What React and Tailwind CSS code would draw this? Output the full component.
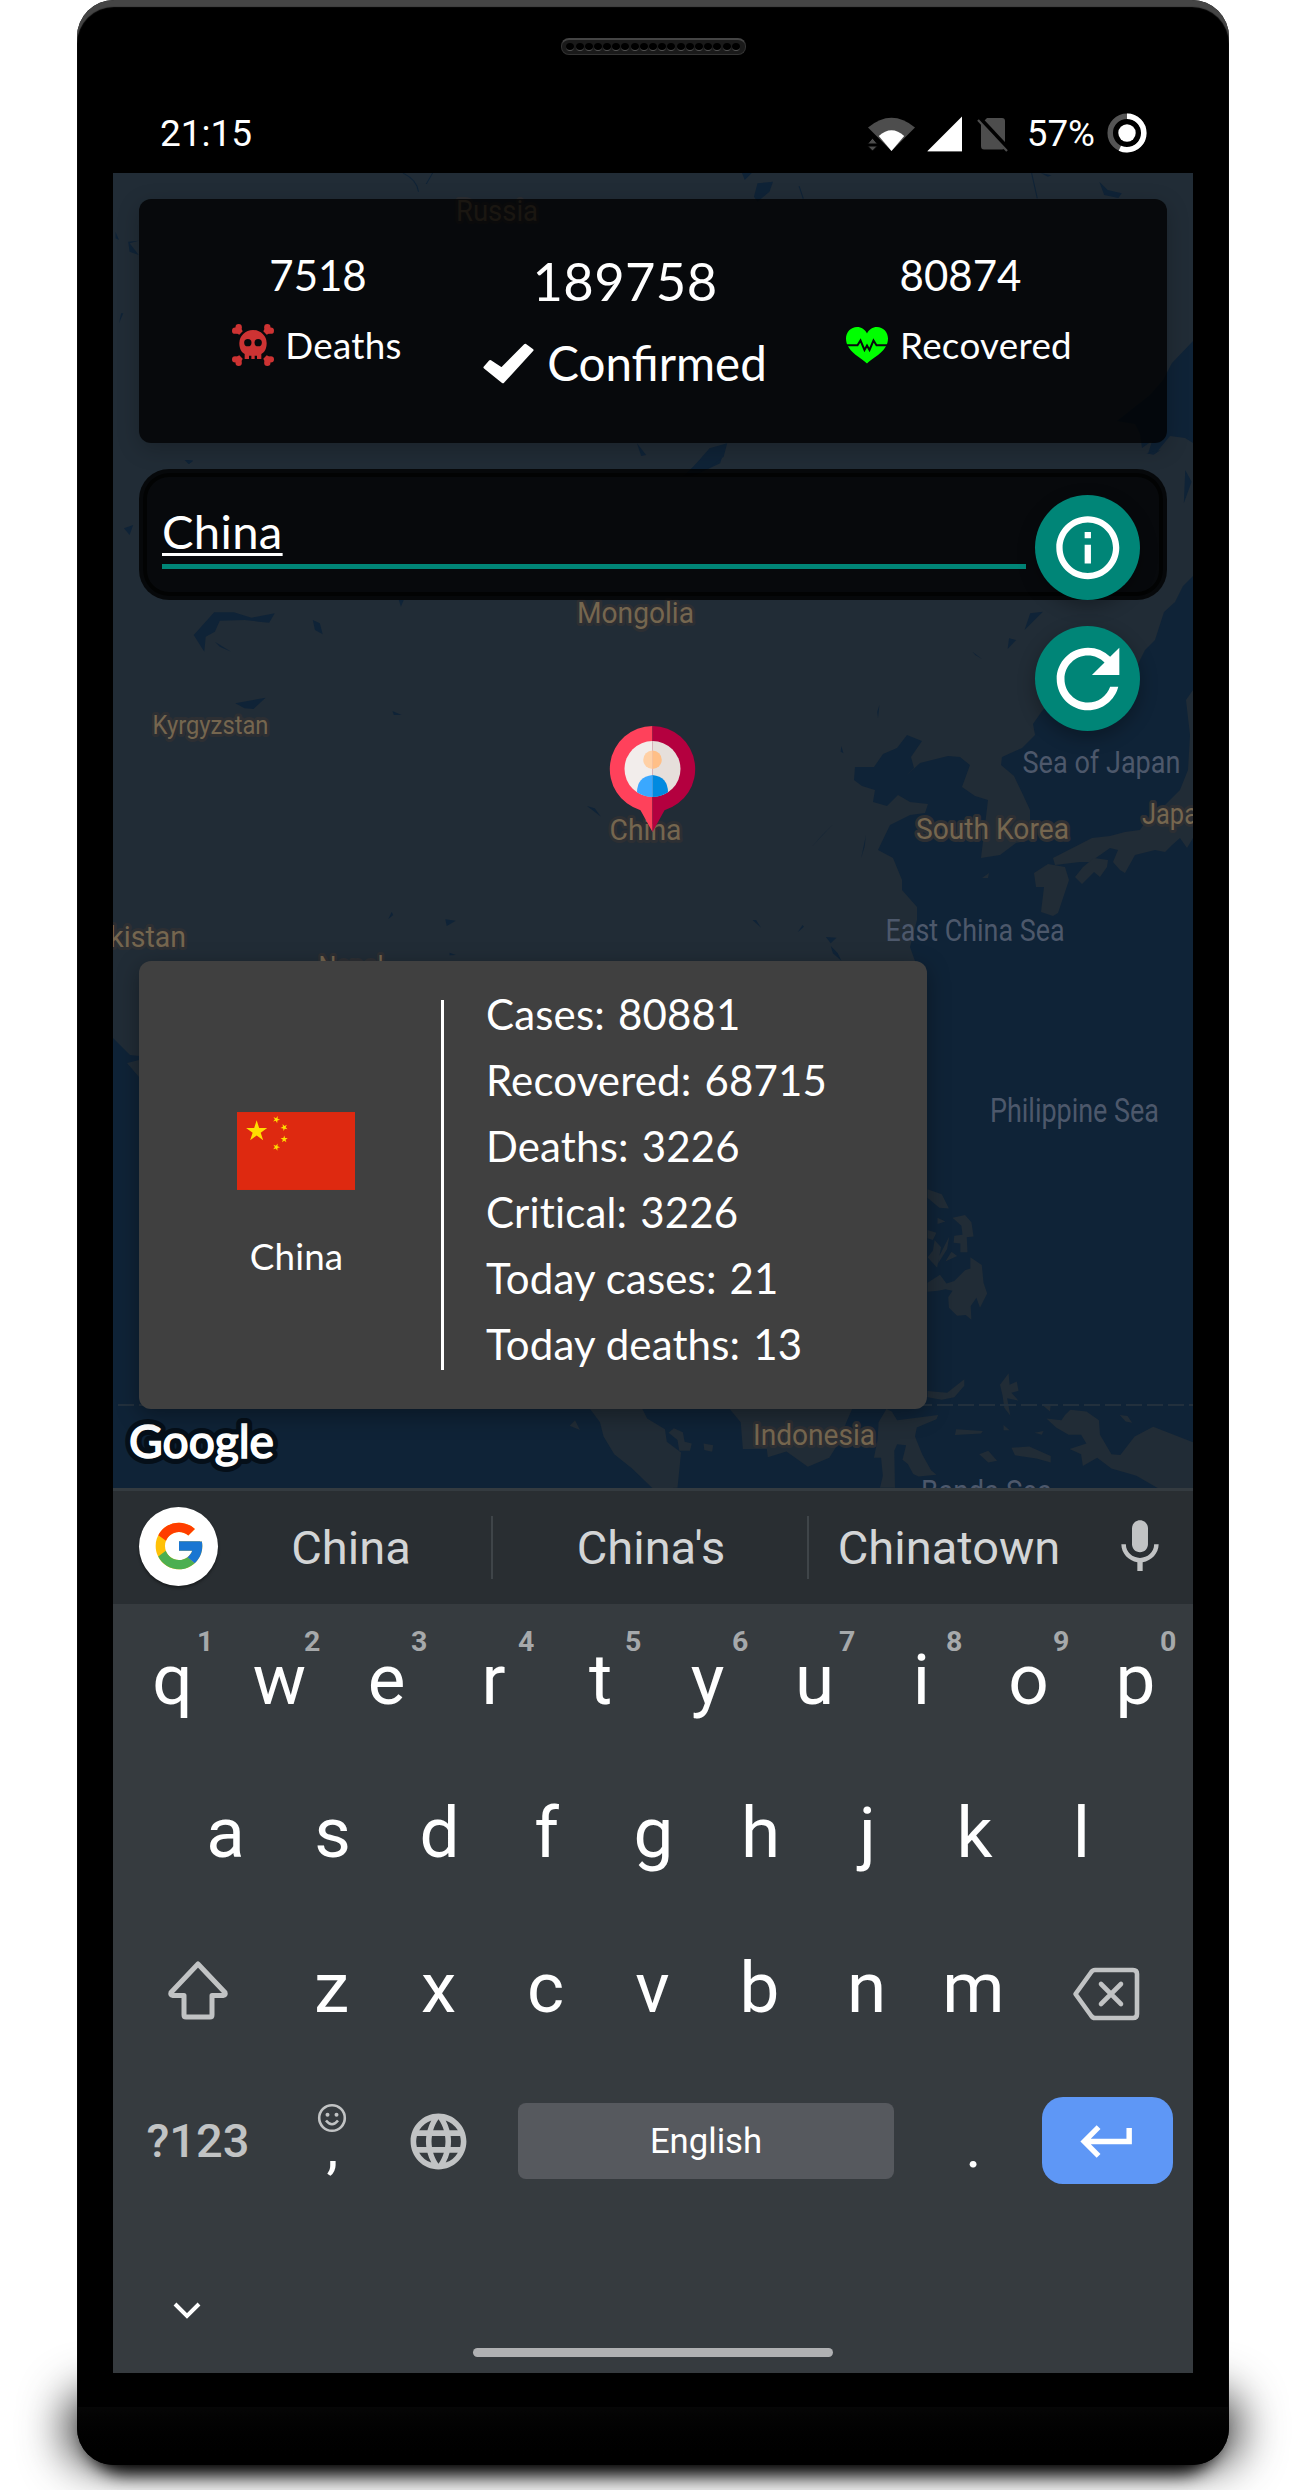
import React from "react";
import { FcGoogle } from "react-icons/fc";
import { MdInfoOutline, MdRefresh, MdMic, MdLanguage, MdKeyboardReturn } from "react-icons/md";

function StatusIcons() {
  return (
    <svg className="h-[40px] w-[144px]" viewBox="867 112 144 40">
      <path d="M892.5 150 869 126.5Q892.5 107 916 126.5Z" fill="#4d4d4d" />
      <path d="M892.5 150 879.8 135Q892.5 123.500 905.200 135Z" fill="#fff" />
      <path d="M868.500 143 873.500 137 878.500 143ZM868.500 145 873.500 150 878.500 145Z" fill="#4d4d4d" stroke="#000" />
      <path d="M963 115.500V150H928.500Z" fill="#fff" />
      <path d="M928.500 150H963V151H928.500Z" fill="#666" />
      <path d="M988 117H1003Q1006 117 1006 120V145Q1006 148.500 1003 148.500H985Q982 148.500 982 145V123Z" fill="#4d4d4d" />
      <path d="M981 118 1009 148" stroke="#000" strokeWidth="5" />
      <path d="M979 119 1008 150" stroke="#4d4d4d" strokeWidth="2.200" />
    </svg>
  );
}

function BatteryRing() {
  return (
    <svg className="h-[40px] w-[40px]" viewBox="0 0 40 40">
      <circle cx="20" cy="20" r="16.800" fill="none" stroke="#555" strokeWidth="5.500" />
      <circle cx="20" cy="20" r="16.800" fill="none" stroke="#fff" strokeWidth="5.500" pathLength="100" strokeDasharray="57 43" transform="rotate(-90 20 20)" />
      <circle cx="20" cy="20" r="8.700" fill="#fff" />
    </svg>
  );
}

function SkullIcon() {
  return (
    <svg className="h-[42px] w-[42px]" viewBox="0 0 126 126" fill="#cd3333">
      {[[0, 0, 1, 1], [126, 0, -1, 1], [0, 126, 1, -1], [126, 126, -1, -1]].map(([x, y, sx, sy], i) => (
        <g key={i} transform={`translate(${x} ${y}) scale(${sx} ${sy})`}>
          <circle cx="20" cy="9.500" r="9.500" />
          <circle cx="9.500" cy="20" r="9.500" />
          <path d="M12 12 26 10 32 22 22 32 10 26Z" />
        </g>
      ))}
      <path d="M63 18a41 39 0 0 1 41 40c0 17-7 28-16 32v15H75V95h-7v10h-10V95h-7v10H38V90C29 86 22 75 22 58a41 39 0 0 1 41-40Z" />
      <circle cx="47.500" cy="56" r="11" fill="#07090c" />
      <circle cx="78.500" cy="56" r="11" fill="#07090c" />
    </svg>
  );
}

function CheckIcon() {
  return (
    <svg className="h-[41px] w-[51px]" viewBox="785 83 156 124">
      <path d="M914 89 935 104 846 201 791 157 807 139 842 162Z" fill="#fff" stroke="#fff" strokeWidth="9" strokeLinejoin="round" />
    </svg>
  );
}

function HeartIcon() {
  return (
    <svg className="h-[37px] w-[42px]" viewBox="0 0 42 37">
      <path d="M21 36.500C14 30 0 24 0 11.500 0 5 5 0 11 0c4.500 0 8 2.500 10 6.500C23 2.500 26.500 0 31 0c6 0 11 5 11 11.500C42 24 28 30 21 36.500Z" fill="#00ff00" />
      <path d="M0 18.300H11.500L14.500 13.500 18.500 23 21 18.500 23.500 23 27.500 13.500 30.500 18.300H42" fill="none" stroke="#07090c" strokeWidth="2" />
    </svg>
  );
}

const LAND = "#212c36";
const SEA = "#0f2337";

function MapLabel({ x, y, w, size, sea, children }) {
  return (
    <text
      x={x}
      y={y}
      textLength={w}
      lengthAdjust="spacingAndGlyphs"
      fontSize={size}
      className="font-['Roboto',sans-serif]"
      fill={sea ? "#4d586b" : "#75664f"}
      stroke={sea ? "none" : "#2d2f33"}
      strokeWidth={sea ? 0 : 6}
      strokeLinejoin="round"
      paintOrder="stroke"
    >
      {children}
    </text>
  );
}

function MapCanvas() {
  return (
    <svg className="absolute inset-0 h-full w-full" viewBox="113 173 1080 1315">
      <rect x="113" y="173" width="1080" height="1315" fill={LAND} />
      <g fill={SEA}>
        <path d="M1193 341 1172 363 1163 380 1150 395 1117 421 1135 424 1140 434 1142 448 1152 441 1148 454 1156 453 1170 436 1185 438 1193 443Z" />
        <path d="M1193 576 1183 586 1175 602 1164 612 1155 640 1145 650 1135 670 1120 690 1100 712 1052 700 1042 711 1033 724 1035 735 1022 748 1002 757 1001 765 1014 776 1024 797 1030 810 1030 840 1016 843 1000 855 981 858 988 800 975 796 962 787 970 765 960 757 948 756 920 763 906 776 914 768 911 757 922 741 907 735 897 748 883 754 874 767 855 767 854 780 862 786 875 790 873 802 887 806 898 795 910 802 928 804 925 813 910 815 890 825 878 850 893 858 902 880 902 890 917 907 917 920 910 947 915 961 800 1100 139 1056 130 1055 113 1038 113 1488 1193 1488Z" />
        <g transform="translate(100 450) scale(.7047 .3333)">
          <path d="M133 555 162 487 190 487 215 503 248 490 240 518 225 515 205 510 170 512 163 545 150 560 148 605ZM192 760 235 743 218 777 205 775ZM302 510 312 520 316 553 305 540ZM163 575 186 605 170 590ZM415 783 428 795 417 795ZM867 0 886 0 880 40 845 75 828 78ZM34 235 47 225 42 255ZM1320 490 1338 485 1312 540ZM1290 565 1300 570 1288 597ZM1238 605 1252 628 1242 615ZM1106 765 1104 805 1103 785ZM1540 60 1549 95 1538 160ZM1485 10 1505 0 1495 14ZM424 450 431 450 427 470ZM121 30 132 32 126 42Z" />
        </g>
        <g transform="translate(100 170) scale(.7047 .3333)">
          <path d="M933 40 955 35 950 65 933 95 928 80ZM911 9 925 9 915 30ZM1418 35 1430 60 1450 70 1445 84 1425 75ZM22 185 27 210 22 205ZM40 215 55 212 42 220 55 255 42 245ZM30 430 33 430 27 460ZM120 870 132 872 126 882ZM890 820 885 860 860 900 838 900 865 835ZM762 820 775 855 768 858ZM1335 9 1350 16 1345 20Z" />
          <path d="M430 9Q450 30 452 65M472 9 463 42M992 48 998 86M1322 9 1330 85" fill="none" stroke={SEA} strokeWidth="1.500" />
        </g>
        <g transform="translate(100 700) scale(.7047 .3333)">
          <path d="M691 318 702 325 711 350ZM1040 373 1025 405 1010 440ZM1087 405 1085 440 1080 475ZM1052 138 1055 160 1051 155ZM409 658 414 635 416 645ZM490 658 505 662 492 678ZM496 758 505 765 496 766ZM926 660 931 660 938 683ZM997 675 999 680 990 697ZM1030 711 1045 713 1037 730ZM1037 738 1047 760 1052 782 1040 760Z" />
        </g>
      </g>
      <g fill={LAND}>
        <path d="M1193 690 1186 700 1190 735 1188 770 1180 790 1165 805 1150 815 1140 830 1125 832 1110 836 1092 838 1053 858 1055 865 1080 862 1090 862 1110 848 1118 850 1113 862 1120 870 1125 873 1135 855 1155 850 1165 852 1172 845 1180 838 1187 848 1193 838Z" />
        <path d="M1075 877 1083 867 1094 858 1108 860 1107 867 1100 877 1094 872 1082 884ZM1034 873 1048 864 1065 867 1069 880 1058 913 1053 916 1041 912 1044 887 1036 887ZM982 878 989 873 988 878ZM127 1063 139 1060 139 1077Z" />
        <g transform="translate(640 940) scale(.35714)">
          <path d="M805 698 845 712 865 752 838 750 805 722ZM875 778 910 770 928 790 934 830 915 832 917 874 897 874 897 850 878 848 880 828 903 825 900 800ZM925 888 957 910 962 960 972 990 952 1030 942 1002 926 1025 928 1063 912 1050 888 1052 865 1030 863 1000 875 982 855 978 835 982 805 985 805 960 840 937 858 962 880 955 910 925 925 920ZM805 812 830 820 820 840 805 835ZM833 778 855 788 833 795ZM825 840 843 860 832 918 805 888 820 870ZM866 830 860 865 835 905 838 885ZM872 873 888 885 855 900Z" />
          <path d="M805 1263 860 1268 908 1230 908 1248 880 1280 845 1287 805 1280ZM1032 1213 1035 1245 1055 1236 1060 1262 1040 1268 1060 1290 1028 1283 1037 1332 1020 1310 1015 1275 1008 1245ZM690 1313 705 1320 720 1345 835 1330 830 1342 775 1365 770 1390 790 1440 815 1485 830 1497 780 1502 765 1495 750 1467 735 1455 745 1415 720 1412 712 1430 714 1534 672 1534 680 1500 675 1450 655 1450 665 1400 668 1350Z" />
          <path d="M240 1300 282 1350 288 1425 355 1425 358 1448 410 1432 470 1475 530 1450 555 1410 580 1345 600 1300ZM-150 1300-112 1350-102 1390-72 1440-22 1480 36 1536 105 1534 115 1435 75 1405 70 1370 20 1340 0 1300ZM80 1380 95 1367 120 1378 125 1405 145 1410 140 1430 110 1430 105 1400ZM178 1410 205 1415 202 1433 180 1428ZM-197 1360-182 1345-168 1372Z" />
          <path d="M885 1370 960 1375 955 1382 882 1386ZM1018 1358 1035 1373 1018 1373ZM1105 1380 1130 1375 1125 1385ZM950 1440 975 1430 1000 1458 975 1463ZM1040 1422 1090 1418 1150 1445 1150 1463 1110 1452 1050 1443ZM1130 1305 1150 1300 1148 1320ZM1205 1315 1250 1320 1285 1345 1288 1385 1320 1440 1345 1442 1385 1390 1437 1363 1550 1407 1550 1536 1452 1536 1390 1500 1320 1480 1280 1450 1240 1473 1235 1440 1203 1425 1250 1410 1235 1385 1200 1385 1165 1365 1138 1340 1180 1345 1190 1330ZM1343 1330 1365 1333 1378 1352 1360 1348Z" />
        </g>
      </g>
      <path d="M1193 1405H113" stroke="#22303d" strokeWidth="2" strokeDasharray="16 5" strokeDashoffset="12" />
      <MapLabel x="456" y="221" w="82" size="29.500">Russia</MapLabel>
      <MapLabel x="577" y="622.500" w="117" size="29.500">Mongolia</MapLabel>
      <MapLabel x="152.500" y="733.500" w="116" size="26">Kyrgyzstan</MapLabel>
      <MapLabel x="609.500" y="839.500" w="72" size="29.500">China</MapLabel>
      <MapLabel x="916" y="839" w="153" size="29.500">South Korea</MapLabel>
      <MapLabel x="1142" y="823.500" w="70" size="29.500">Japan</MapLabel>
      <MapLabel x="76" y="947" w="110" size="29.500">Pakistan</MapLabel>
      <MapLabel x="318.500" y="977" w="65" size="29.500">Nepal</MapLabel>
      <MapLabel x="753" y="1445" w="122" size="30">Indonesia</MapLabel>
      <MapLabel x="1022.500" y="772.500" w="158" size="32" sea>Sea of Japan</MapLabel>
      <MapLabel x="885.500" y="941" w="179" size="32" sea>East China Sea</MapLabel>
      <MapLabel x="990" y="1121.500" w="169" size="33" sea>Philippine Sea</MapLabel>
      <MapLabel x="921" y="1502" w="131" size="32" sea>Banda Sea</MapLabel>
      <g className="font-['Lato',sans-serif]">
        <text x="129" y="1457.500" textLength="145" lengthAdjust="spacingAndGlyphs" fontSize="47" fill="#fff" stroke="#050f19" strokeWidth="12" strokeLinejoin="round" paintOrder="stroke">
          Google
        </text>
        <text aria-hidden="true" x="129" y="1457.500" textLength="145" lengthAdjust="spacingAndGlyphs" fontSize="47" fill="#fff" stroke="#fff" strokeWidth="1.600">
          Google
        </text>
      </g>
      <g>
        <path d="M652.500 726a43 43 0 0 0-12 84.200L652.500 832Z" fill="#ff415b" />
        <path d="M652.500 726a43 43 0 0 1 12 84.200L652.500 832Z" fill="#b4003f" />
        <path d="M652.500 741a28 28 0 0 0 0 56Z" fill="#f2edeb" />
        <path d="M652.500 741a28 28 0 0 1 0 56Z" fill="#e6dfdb" />
        <path d="M652.500 750.500a9.200 9.200 0 0 0 0 18.500Z" fill="#ffd0a5" />
        <path d="M652.500 750.500a9.200 9.200 0 0 1 0 18.500Z" fill="#ffbf87" />
        <path d="M652.500 775q-15.500 2-15.500 17.300 7 4.700 15.500 4.700Z" fill="#3aa8ff" />
        <path d="M652.500 775q15.500 2 15.500 17.300-7 4.700-15.500 4.700Z" fill="#008ae0" />
      </g>
    </svg>
  );
}

function Stat({ icon, value, label, className, numClass, rowClass }) {
  return (
    <div className={`flex shrink-0 flex-col items-center ${className}`}>
      <div className={numClass}>{value}</div>
      <div className={`flex items-center whitespace-nowrap ${rowClass}`}>
        {icon}
        <span>{label}</span>
      </div>
    </div>
  );
}

const STAR = "0,-1 .2245,-.309 .9511,-.309 .3633,.118 .5878,.809 0,.382 -.5878,.809 -.3633,.118 -.9511,-.309 -.2245,-.309";

function Flag() {
  return (
    <svg className="h-[78px] w-[118px]" viewBox="384 482 330 218">
      <rect x="384" y="482" width="330" height="218" fill="#de2910" />
      <g fill="#ffde00">
        <polygon points={STAR} transform="translate(439 536) scale(31)" />
        <polygon points={STAR} transform="translate(494 503) rotate(23) scale(10.500)" />
        <polygon points={STAR} transform="translate(516 525) rotate(46) scale(10.500)" />
        <polygon points={STAR} transform="translate(516 558) scale(10.500)" />
        <polygon points={STAR} transform="translate(494 580) rotate(20) scale(10.500)" />
      </g>
    </svg>
  );
}

const FACTS = [
  ["Cases:", "80881"],
  ["Recovered:", "68715"],
  ["Deaths:", "3226"],
  ["Critical:", "3226"],
  ["Today cases:", "21"],
  ["Today deaths:", "13"],
];

function Key({ ch, hint }) {
  return (
    <div className="relative flex h-full w-[107px] items-center justify-center">
      <span className="text-[71px] leading-[71px]">{ch}</span>
      {hint && <span className="absolute left-[78px] top-[21px] text-[28.500px] font-bold leading-[34px] text-[#a6a9ab]">{hint}</span>}
    </div>
  );
}

function ShiftIcon() {
  return (
    <svg className="h-[62px] w-[64px]" viewBox="-32 0 64 62" fill="none" stroke="#c1c3c4" strokeWidth="5" strokeLinejoin="round">
      <path d="M0 5 27 33.500Q28 36 25 36.500H14V56Q14 58 12 58H-12Q-14 58-14 56V36.500H-25Q-28 36-27 33.500Z" />
    </svg>
  );
}

function BackspaceIcon() {
  return (
    <svg className="h-[54px] w-[68px]" viewBox="0 0 68 54" fill="none" stroke="#c1c3c4" strokeWidth="4.600" strokeLinejoin="round" strokeLinecap="round">
      <path d="M3.500 27 19 5.500Q20.500 3 23 3H61Q65 3 65 7V47Q65 51 61 51H23Q20.500 51 19 48.500Z" />
      <path d="M29 17 49 37M49 17 29 37" />
    </svg>
  );
}

function Keyboard() {
  return (
    <section className="flex h-[885px] flex-col border-t-3 border-[#343b40] bg-[#363b3f] font-['Roboto',sans-serif] text-white">
      <div className="flex h-[113px] shrink-0 items-center bg-[#292e32] pl-[26px] text-[47px] leading-[56px] text-[#d3d5d6]">
        <div className="mb-[3px] flex h-[79px] w-[79px] shrink-0 items-center justify-center rounded-full bg-white shadow-[0_2px_3px_rgba(0,0,0,.4)]">
          <FcGoogle size={56} />
        </div>
        <div className="ml-[-8px] flex h-[63px] w-[283px] items-center justify-center border-r-2 border-[#3f4549] pl-[1px]">China</div>
        <div className="flex h-[63px] w-[316px] items-center justify-center border-r-2 border-[#3f4549] pl-[2px]">China's</div>
        <div className="flex w-[280px] items-center justify-center">Chinatown</div>
        <MdMic size={64} className="mb-[2px] ml-[19px] text-[#c1c3c4]" />
      </div>
      <div className="flex h-[150px] shrink-0 pl-[6px]">
        {[..."qwertyuiop"].map((c, i) => (
          <Key key={c} ch={c} hint={String((i + 1) % 10)} />
        ))}
      </div>
      <div className="flex h-[157px] shrink-0 pl-[59px]">
        {[..."asdfghjkl"].map((c) => (
          <Key key={c} ch={c} />
        ))}
      </div>
      <div className="flex h-[153px] shrink-0 items-center pl-[5px]">
        <div className="flex w-[160px] items-center justify-center pt-1"><ShiftIcon /></div>
        {[..."zxcvbnm"].map((c) => (
          <Key key={c} ch={c} />
        ))}
        <div className="flex w-[158px] items-center justify-center pt-3"><BackspaceIcon /></div>
      </div>
      <div className="flex h-[154px] shrink-0 items-center pl-[5px]">
        <div className="w-[160px] text-center text-[47px] font-medium leading-[56px] text-[#c1c3c4]">?123</div>
        <div className="flex h-full w-[107px] flex-col items-center pt-[39px]">
          <svg className="h-[30px] w-[30px]" viewBox="0 0 30 30" fill="none" stroke="#c1c3c4" strokeWidth="2.600">
            <circle cx="15" cy="15" r="12.800" />
            <circle cx="10.500" cy="11.800" r="2" fill="#c1c3c4" stroke="none" />
            <circle cx="19.500" cy="11.800" r="2" fill="#c1c3c4" stroke="none" />
            <path d="M9 17.500Q15 25 21 17.500" />
          </svg>
          <span className="-mt-[16px] pl-[2px] text-[60px] leading-[60px]">,</span>
        </div>
        <div className="flex w-[107px] justify-center"><MdLanguage size={67} className="text-[#c1c3c4]" /></div>
        <div className="ml-[26px] flex h-[76px] w-[376px] items-center justify-center rounded-[8px] bg-[#56595e] pt-[1px] text-[34.700px]">English</div>
        <div className="w-[107px] ml-[26px] pt-[11px] text-center text-[60px] leading-[54px]">.</div>
        <div className="mb-[2px] ml-[15px] flex h-[87px] w-[131px] items-center justify-center rounded-[21px] bg-[#5e97f6] pt-[3px]">
          <MdKeyboardReturn size={65} />
        </div>
      </div>
      <div className="flex grow flex-col items-start pt-[84px]">
        <svg className="ml-[60px] h-[18px] w-[28px]" viewBox="0 0 28 18">
          <path d="M2 2 14 14 26 2" fill="none" stroke="#fff" strokeWidth="4" />
        </svg>
        <div className="mt-[28px] h-[9px] w-[360px] self-center rounded-full bg-[#b0b1b3]" />
      </div>
    </section>
  );
}

export default function App() {
  return (
    <div className="relative isolate h-[2490px] w-[1305px] overflow-hidden bg-white font-['Lato',sans-serif] text-white">
      <div className="absolute bottom-[52px] left-[92px] right-[92px] -z-10 h-[20px] rounded-[16px] bg-black shadow-[0_0_46px_26px_rgba(0,0,0,.8)]" />
      <div className="absolute bottom-[28px] left-[100px] right-[100px] -z-10 h-[50px] rounded-[30px] bg-black shadow-[0_0_18px_12px_#000]" />
      <main className="ml-[77px] flex h-[2465px] w-[1152px] flex-col overflow-hidden rounded-[37px] bg-black shadow-[inset_0_7px_1px_#454545]">
        <div className="flex h-[93px] shrink-0 justify-center pt-[38px]">
          <div className="flex h-[17px] w-[185px] items-center justify-center gap-[1.200px] rounded-[8px] border border-[#333] border-t-2 border-t-[#444] bg-[#1a1a1a]">
            {Array.from({ length: 19 }, (_, i) => (
              <span key={i} className="h-[8px] w-[8px] rounded-full border-b border-[#555] bg-black" />
            ))}
          </div>
        </div>
        <header className="flex h-[80px] shrink-0 items-center px-[82px] font-['Roboto',sans-serif] text-[37px] leading-[44px]">
          <span className="pl-[1px] pt-[2px]">21:15</span>
          <div className="ml-auto flex items-center">
            <StatusIcons />
            <span className="ml-[17px] mr-[12px] pt-[2px] text-[36.750px]">57%</span>
            <BatteryRing />
          </div>
        </header>
        <div className="mx-auto flex h-[2200px] w-[1080px] shrink-0 flex-col">
          <section className="relative flex h-[1315px] shrink-0 flex-col overflow-hidden p-[26px]">
            <MapCanvas />
            <div className="relative flex h-[244px] shrink-0 items-start rounded-[12px] bg-black/78 pl-[40px] pt-[50px] shadow-[0_6px_22px_rgba(0,0,0,.22)]">
              <Stat className="w-[276px]" numClass="pl-[2px] pt-[1px] text-[42px] leading-[50px]" rowClass="mt-[23px] gap-[11px] text-[36.750px] leading-[44px] tracking-[.3px]" icon={<SkullIcon />} value="7518" label="Deaths" />
              <Stat className="w-[340px]" numClass="text-[52.500px] leading-[64px] tracking-[.4px]" rowClass="mt-[22px] gap-[13px] text-[47.500px] leading-[56px]" icon={<CheckIcon />} value="189758" label="Confirmed" />
              <Stat className="w-[328px]" numClass="pl-[3px] pt-[1px] text-[42px] leading-[50px]" rowClass="mt-[23px] gap-[12px] text-[36.750px] leading-[44px] tracking-[.3px]" icon={<HeartIcon />} value="80874" label="Recovered" />
            </div>
            <div className="relative mt-[26px] h-[131px] shrink-0 rounded-[30px] border-4 border-black/10 bg-black/78 pl-[19px] pt-[30px] shadow-[inset_0_0_0_4px_rgba(0,0,0,.7)]">
              <div className="text-[47.250px] leading-[56px] tracking-[.3px]">
                <span className="underline decoration-3 underline-offset-[4px] [text-decoration-skip-ink:none]">China</span>
              </div>
              <div className="mt-[5px] h-[5px] w-[864px] bg-[#008577]" />
            </div>
            <div className="absolute left-[922px] top-[322px] flex flex-col gap-[26px]">
              <button className="flex h-[105px] w-[105px] items-center justify-center rounded-full bg-[#008577] shadow-[0_6px_18px_rgba(0,0,0,.3)]">
                <MdInfoOutline size={75.600} />
              </button>
              <button className="flex h-[105px] w-[105px] items-center justify-center rounded-full bg-[#008577] shadow-[0_6px_18px_rgba(0,0,0,.3)]">
                <MdRefresh size={94} />
              </button>
            </div>
            <div className="relative mt-[361px] flex h-[448px] w-[788px] shrink-0 rounded-[12px] bg-[#404040] shadow-[0_6px_22px_rgba(0,0,0,.35)]">
              <div className="flex w-[302px] flex-col items-center pl-[12px] pt-[151px]">
                <Flag />
                <div className="mt-[44px] pl-[1px] text-[36.750px] leading-[44px] tracking-[.2px]">China</div>
              </div>
              <div className="mt-[39px] h-[370px] w-[3px] bg-white" />
              <div className="ml-[42px] mt-[19.500px] text-[42px] leading-[66px] tracking-[.15px]">
                {FACTS.map(([k, v]) => (
                  <div key={k} className="flex gap-[13px]">
                    <span>{k}</span>
                    <span>{v}</span>
                  </div>
                ))}
              </div>
            </div>
          </section>
          <Keyboard />
        </div>
        <div className="mt-[34px] grow bg-gradient-to-b from-[#060606] to-black" />
      </main>
    </div>
  );
}
